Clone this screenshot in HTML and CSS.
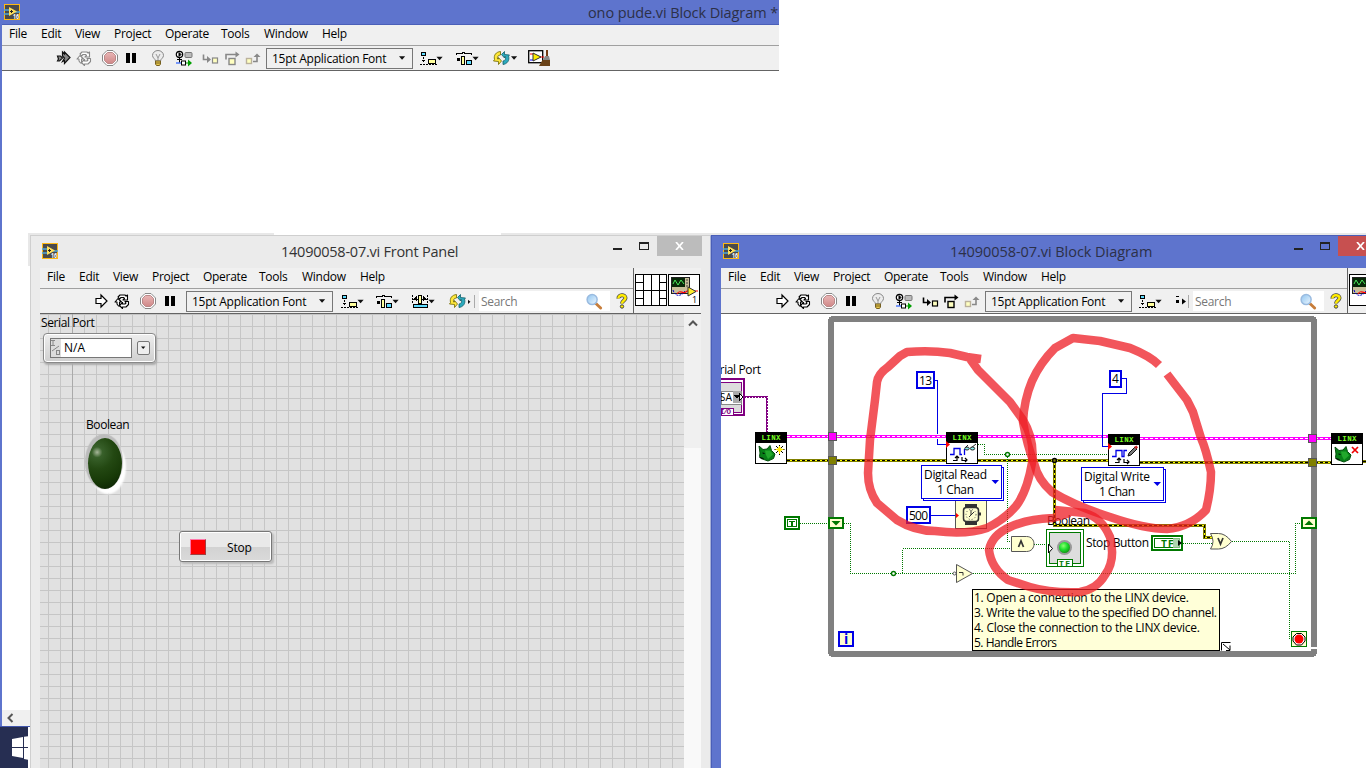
FILE: index.html
```html
<!DOCTYPE html>
<html lang="en">
<head>
<meta charset="utf-8">
<title>14090058-07.vi Block Diagram</title>
<link rel="stylesheet" href="styles.css">
</head>
<body>
<svg class="defs" width="0" height="0">
  <defs>
    <linearGradient id="lens" x1="0" y1="0" x2="1" y2="1"><stop offset="0" stop-color="#8fc4f0"/><stop offset="1" stop-color="#eef8ff"/></linearGradient>
    <linearGradient id="redoct" x1="0" y1="0" x2="0" y2="1"><stop offset="0" stop-color="#e9b5b5"/><stop offset="1" stop-color="#cf8888"/></linearGradient>
    <radialGradient id="greenled" cx=".4" cy=".35" r=".7"><stop offset="0" stop-color="#8cff70"/><stop offset=".5" stop-color="#20e030"/><stop offset="1" stop-color="#109010"/></radialGradient>
  </defs>
  <symbol id="app" viewBox="0 0 16 16"><rect x=".5" y=".5" width="15" height="15" fill="#4a4a4a" stroke="#fdb813"/><path d="M0 6h5M0 10h5M11 8h5" stroke="#4fa6d8" stroke-width="1.5"/><path d="M5 3l8 4.500-8 4.500z" fill="#ffdf5a"/><path d="M6 7.500h3M7.500 6v3" stroke="#222"/><text x="9" y="14.500" font-size="6.500" fill="#fff" font-weight="bold" textLength="6" lengthAdjust="spacingAndGlyphs">16</text></symbol>
  <symbol id="run" viewBox="0 0 16 16"><path d="M1 5.500h5V2l6 6-6 6v-3.500H1z" fill="#fff" stroke="#000" stroke-width="1.200"/></symbol>
  <symbol id="broken" viewBox="0 0 16 16"><path d="M1.500 6h3l2 2-3 3h-2l1-2zM6.500 2l2 2v-2l5.500 5.500L8.500 13.500v-3l-2 1 2-3.500-2-2z" fill="#888" stroke="#111" stroke-width="1.200"/></symbol>
  <symbol id="cont" viewBox="0 0 16 16"><g fill="#fff" stroke="currentColor" stroke-width="1.100" stroke-linejoin="round"><path d="M4 4l2-2h5l1 1 1.500-1v5H9l1.500-1.500L9.500 4.500H7L5.500 6z"/><path d="M1 9l3-3.500L7.500 9h-2v2.500l1 1.500h-2L3 11V9z"/><path d="M14.500 8.500v3L12 14H8.500v1.500l-3-3 3-3V11H11l1-1-1-1.500z"/></g></symbol>
  <symbol id="abort" viewBox="0 0 16 16"><path d="M5 .5h6L15.500 5v6L11 15.500H5L.5 11V5z" fill="#fff" stroke="#888"/><path d="M5.500 2.500h5l3 3v5l-3 3h-5l-3-3v-5z" fill="url(#redoct)" stroke="#b98989"/></symbol>
  <symbol id="pause" viewBox="0 0 12 16"><path d="M1 3h4v10H1zM7 3h4v10H7z" fill="#000"/></symbol>
  <symbol id="bulb" viewBox="0 0 14 16"><path d="M4.500 11C4.500 9 1.500 8 1.500 5.500a5.500 5 0 0 1 11 0c0 2.500-3 3.500-3 5.500z" fill="#ececec" stroke="#888"/><path d="M5 4l2 4 2-4M7 8v3" fill="none" stroke="#999"/><path d="M4.500 11h5v3l-1 1.500h-3l-1-1.500z" fill="#e8c84c" stroke="#776020"/><path d="M4 13h6" stroke="#776020"/></symbol>
  <symbol id="exec" viewBox="0 0 18 16"><circle cx="4.500" cy="4" r="3.200" fill="#fff" stroke="#000" stroke-width="1.200"/><path d="M4 2v4l2-2zM4.500 7v5M2 9h5" stroke="#000"/><rect x="10" y="2" width="7" height="5" rx="1" fill="#bbb" stroke="#777"/><path d="M1 12.500h6" stroke="#0040ff"/><rect x="6.500" y="10.500" width="4" height="4" fill="#fff" stroke="#000"/><path d="M11 12.500h3" stroke="#090"/><path d="M13 9l4 3.500-4 3.500z" fill="#00a000"/></symbol>
  <symbol id="stepin" viewBox="0 0 18 16"><path d="M2.500 4v5H7" fill="none" stroke="currentColor" stroke-width="1.600"/><path d="M6 5.500L10 9l-4 3.500z" fill="currentColor"/><rect x="11.500" y="7.500" width="5" height="5" fill="#ffffc0" stroke="currentColor" stroke-width="1.200"/></symbol>
  <symbol id="stepover" viewBox="0 0 18 16"><path d="M2 9V4h11" fill="none" stroke="currentColor" stroke-width="1.600"/><path d="M11.500 1l4 3-4 3z" fill="currentColor"/><rect x="5" y="8" width="6" height="6" fill="#ffffc0" stroke="currentColor" stroke-width="1.400"/></symbol>
  <symbol id="stepout" viewBox="0 0 18 16"><rect x="2.500" y="8" width="5" height="5" fill="#ffffc0" stroke="#bbb29c" stroke-width="1.400"/><path d="M9 11h4V5" fill="none" stroke="#888" stroke-width="1.600"/><path d="M9.500 6.500L13 3l3.500 3.500z" fill="#888"/></symbol>
  <symbol id="drop" viewBox="0 0 8 5"><path d="M0 0h7L3.500 4z" fill="#111"/></symbol>
  <symbol id="align" viewBox="0 0 24 16"><g shape-rendering="crispEdges"><rect x="1.500" y="1.500" width="4" height="3" fill="#5fdcff" stroke="#000"/><path d="M3.500 6v5M0 13.500h17" stroke="#000" stroke-dasharray="2 1"/><path d="M1 9h5l-2.500 3z"/><rect x="8.500" y="8.500" width="7" height="4" fill="#ffff9c" stroke="#000"/></g><use href="#drop" x="16.500" y="6" width="7" height="5"/></symbol>
  <symbol id="dist" viewBox="0 0 24 16"><g shape-rendering="crispEdges"><path d="M.5 4V2.500h6v-1h2v1h7V4" fill="none" stroke="#000"/><path d="M1 7h3v3H1z"/><rect x="5.500" y="5.500" width="3" height="8" fill="#ffff9c" stroke="#000"/><rect x="10.500" y="9.500" width="5" height="4" fill="#5fdcff" stroke="#000"/></g><use href="#drop" x="16.500" y="6" width="7" height="5"/></symbol>
  <symbol id="resize" viewBox="0 0 24 16"><g shape-rendering="crispEdges"><path d="M.5 1v9M15.500 1v9M1 5.500h5M10 5.500h5" stroke="#000" stroke-dasharray="2 1"/><rect x="6.500" y="1.500" width="3" height="8" fill="#ffff9c" stroke="#000"/><path d="M2 5l3-3v6zM14 5l-3-3v6z"/><rect x="1.500" y="10.500" width="14" height="3" fill="#5fdcff" stroke="#000"/></g><use href="#drop" x="16.500" y="6" width="7" height="5"/></symbol>
  <symbol id="reorder" viewBox="0 0 17 16"><path d="M7.500 1.500C3 2 .5 5 1.500 9.500L.5 11l5 .5v3l3-3.500-3-3.500v1.500H4.500C4 7 5 5 7.500 5z" fill="#ffe83b" stroke="#6d6600" stroke-width=".8"/><path d="M10 14.500c4-.5 7-4 5.500-8.500l1-1-5-.5v-3l-3 3 3 3.500V6.500h1C13 9 12 11 10 11z" fill="#2baabd" stroke="#115e6b" stroke-width=".8"/></symbol>
  <symbol id="clean" viewBox="0 0 24 17"><rect x=".7" y=".7" width="14" height="12" fill="#fff" stroke="#000" stroke-width="1.300"/><path d="M2 4h3M12 7h4" stroke="red"/><path d="M2 10h3" stroke="#00f"/><path d="M5 3l8 4-8 4z" fill="#ffec00" stroke="#333"/><path d="M18 0h2v7h-2z" fill="#743b12"/><path d="M17 6h4l1 4h-7z" fill="#888"/><path d="M14.500 10H22v6H11z" fill="#6a4217"/></symbol>
  <symbol id="glass" viewBox="0 0 18 18"><path d="M11 11l5 5" stroke="#c77d3a" stroke-width="3" stroke-linecap="round"/><circle cx="7" cy="7" r="5.300" fill="url(#lens)" stroke="#9abbe0" stroke-width="1.600"/></symbol>
  <symbol id="help" viewBox="0 0 12 16"><path d="M2.500 5.500C2 1.500 9.500 1 9.500 5c0 2.500-3.500 2.500-3.500 5.500" fill="none" stroke="#444" stroke-width="4"/><path d="M2.500 5.500C2 1.500 9.500 1 9.500 5c0 2.500-3.500 2.500-3.500 5.500" fill="none" stroke="#ffec00" stroke-width="2.500"/><circle cx="6" cy="13.500" r="1.700" fill="#ffec00" stroke="#444"/></symbol>
  <symbol id="pane" viewBox="0 0 32 32"><path d="M.5.5h31v31H.5zM8.500 0v32M16.500 0v32M24.500 0v32M8 16.500h16M0 8.500h8M0 16.500h8M0 24.500h8M24 8.500h8M24 16.500h8M24 24.500h8" fill="#fff" stroke="#000" shape-rendering="crispEdges"/></symbol>
  <symbol id="viicon" viewBox="0 0 32 32"><rect x=".5" y=".5" width="31" height="31" fill="#fff" stroke="#000"/><rect x="3.500" y="3.500" width="18" height="16" fill="#c8c09a" stroke="#222"/><rect x="4" y="4" width="13" height="9" fill="#082808"/><path d="M5 10l2-4 3 5 3-5 3 4" fill="none" stroke="#4be85a"/><path d="M18 6h2M18 9h2M18 12h2" stroke="#444"/><path d="M5 16c2 7 8 7 12 1" fill="none" stroke="#00c" stroke-dasharray="2 1"/><path d="M9 20c3-6 6 2 10-3h11" fill="none" stroke="red" stroke-width="1.200"/><path d="M20 13l8 4.500-8 4.500z" fill="#ffec2b" stroke="#333"/><text x="24" y="29" font-size="9">1</text></symbol>
  <symbol id="linx" viewBox="0 0 32 32"><rect x=".5" y=".5" width="31" height="31" fill="#fff" stroke="#000"/><path d="M0 0h32v11H0z"/><text class="pix" x="6.500" y="8" fill="#7f2" font-size="7.500" textLength="19">LINX</text></symbol>
  <symbol id="dog" viewBox="0 0 18 17"><path d="M1 1l4 3.500 4-.5L12 .5l1.500 5L17 9l-1.500 4.500L10 16l-7-2.500-1.500-2L2 8z" fill="#087f18" stroke="#034d0b"/><path d="M7 5.500h5l3 4-5 4.500-2-4z" fill="#22a82c"/><path d="M4.500 8l2 .5M1.500 12.500l4 1" stroke="#000"/></symbol>
</svg>

<main class="desktop">
  <section class="window back">
    <header class="titlebar"><svg class="appicon"><use href="#app"/></svg><h1>ono pude.vi Block Diagram *</h1></header>
    <div class="chrome">
      <nav class="menu"><span>File</span><span>Edit</span><span>View</span><span>Project</span><span>Operate</span><span>Tools</span><span>Window</span><span>Help</span></nav>
      <div class="toolbar tools-back">
        <svg class="i16"><use href="#broken"/></svg><svg class="i16 dim"><use href="#cont"/></svg><svg class="i16"><use href="#abort"/></svg><svg class="i12"><use href="#pause"/></svg><svg class="i14"><use href="#bulb"/></svg><svg class="i18"><use href="#exec"/></svg><svg class="i18 dim"><use href="#stepin"/></svg><svg class="i18 dim"><use href="#stepover"/></svg><svg class="i18"><use href="#stepout"/></svg>
        <div class="combo"><span>15pt Application Font</span><svg class="caret"><use href="#drop"/></svg></div>
        <svg class="i24"><use href="#align"/></svg><svg class="i24"><use href="#dist"/></svg><span class="pair"><svg class="i17"><use href="#reorder"/></svg><svg class="caret"><use href="#drop"/></svg></span><svg class="i24"><use href="#clean"/></svg>
      </div>
    </div>
    <div class="backbody"></div>
    <div class="hscroll"><svg width="8" height="10" viewBox="0 0 8 10"><path d="M6.500 1l-4 4 4 4" fill="none" stroke="#555" stroke-width="2"/></svg></div>
  </section>
  <div class="taskbar"><svg width="18" height="24" viewBox="0 0 18 24"><path d="M0 3l11-2v10H0zM12 .8L18 0v11h-6zM0 12h11v10L0 20zM12 12h6v12l-6-1z" fill="#fff"/></svg></div>
  <div class="ghost ghost-left"></div>
  <div class="ghost ghost-right"></div>

  <section class="window front">
    <header class="titlebar"><svg class="appicon"><use href="#app"/></svg><h1>14090058-07.vi Front Panel</h1>
      <div class="caption"><i class="min"></i><i class="max"></i><b class="close"><svg width="9" height="8" viewBox="0 0 9 8"><path d="M1 0l7 8M8 0L1 8" stroke="#fff" stroke-width="1.700"/></svg></b></div></header>
    <div class="content">
      <div class="head">
        <div class="chrome">
          <nav class="menu"><span>File</span><span>Edit</span><span>View</span><span>Project</span><span>Operate</span><span>Tools</span><span>Window</span><span>Help</span></nav>
          <div class="toolbar tools-front">
            <svg class="i16"><use href="#run"/></svg><svg class="i16"><use href="#cont"/></svg><svg class="i16"><use href="#abort"/></svg><svg class="i12"><use href="#pause"/></svg>
            <div class="combo"><span>15pt Application Font</span><svg class="caret"><use href="#drop"/></svg></div>
            <svg class="i24"><use href="#align"/></svg><svg class="i24"><use href="#dist"/></svg><svg class="i24"><use href="#resize"/></svg><span class="pair"><svg class="i17"><use href="#reorder"/></svg><svg class="caret side"><use href="#drop"/></svg></span><i class="sep"></i>
            <div class="search"><span>Search</span><svg class="i18"><use href="#glass"/></svg></div><svg class="i12"><use href="#help"/></svg>
          </div>
        </div>
        <div class="vipane"><svg class="i32"><use href="#pane"/></svg><svg class="i32"><use href="#viicon"/></svg></div>
      </div>
      <div class="panelrow">
        <div class="panel">
          <i class="origin"></i>
          <span class="label serial">Serial Port</span>
          <div class="visa"><span class="io"><svg width="10" height="18" viewBox="0 0 10 18"><path d="M0 1.500h4M2 1v6M0 6.500h4M1 12l7-5" fill="none" stroke="#888"/><rect x="5.500" y="11.500" width="3" height="4" fill="none" stroke="#888"/></svg></span><span class="value">N/A</span><span class="pick"><svg class="caret"><use href="#drop"/></svg></span></div>
          <span class="label bool">Boolean</span>
          <div class="led"></div>
          <div class="stop"><i></i><span>Stop</span></div>
        </div>
        <div class="vscroll"><svg width="10" height="8" viewBox="0 0 10 8"><path d="M1 6.500l4-4 4 4" fill="none" stroke="#555" stroke-width="2"/></svg></div>
      </div>
    </div>
  </section>

  <section class="window block">
    <header class="titlebar"><svg class="appicon"><use href="#app"/></svg><h1>14090058-07.vi Block Diagram</h1>
      <div class="caption"><i class="min"></i><i class="max"></i><b class="close"><svg width="9" height="8" viewBox="0 0 9 8"><path d="M1 0l7 8M8 0L1 8" stroke="#fff" stroke-width="1.700"/></svg></b></div></header>
    <div class="content">
      <div class="head">
        <div class="chrome">
          <nav class="menu"><span>File</span><span>Edit</span><span>View</span><span>Project</span><span>Operate</span><span>Tools</span><span>Window</span><span>Help</span></nav>
          <div class="toolbar tools-block">
            <svg class="i16"><use href="#run"/></svg><svg class="i16"><use href="#cont"/></svg><svg class="i16"><use href="#abort"/></svg><svg class="i12"><use href="#pause"/></svg><svg class="i14"><use href="#bulb"/></svg><svg class="i18"><use href="#exec"/></svg><svg class="i18"><use href="#stepin"/></svg><svg class="i18"><use href="#stepover"/></svg><svg class="i18"><use href="#stepout"/></svg>
            <div class="combo"><span>15pt Application Font</span><svg class="caret"><use href="#drop"/></svg></div>
            <svg class="i24"><use href="#align"/></svg><svg width="13" height="16" viewBox="0 0 13 16"><path d="M1 3h3v1H1zM1 7h3v3H1z"/><path d="M7 5.500l4 3-4 3z"/></svg><i class="sep"></i>
            <div class="search"><span>Search</span><svg class="i18"><use href="#glass"/></svg></div><svg class="i12"><use href="#help"/></svg>
          </div>
        </div>
        <div class="vipane"><svg class="i32"><use href="#viicon"/></svg></div>
      </div>
      <svg class="diagram" width="645" height="454" viewBox="721 314 645 454">
        <g shape-rendering="crispEdges">
          <rect x="831" y="319" width="483" height="335" rx="2" fill="none" stroke="#808080" stroke-width="6"/>
          <path d="M1310 647h7v2h-7z" fill="#fff"/>
          <path d="M787 436.500H946M978 436.500h130M1140 438.500h191" stroke="#f0f" stroke-width="3"/>
          <path d="M787 436.500H946M978 436.500h130M1140 438.500h191" stroke="#fff" stroke-dasharray="3 2"/>
          <g fill="none"><path d="M787 460.500H946M978 460.500h130M1140 462.500h191M1363 461.500h3M1054.500 460v65.500h150V537.500h10" stroke="#808000" stroke-width="3"/>
          <path d="M787 460.500H946M978 460.500h130M1140 462.500h191M1363 461.500h3M1054.500 460v65.500h150V537.500h10" stroke="#ff0"/>
          <path d="M787 460.500H946M978 460.500h130M1140 462.500h191M1363 461.500h3M1054.500 460v65.500h150V537.500h10" stroke="#000" stroke-dasharray="3 2"/></g>
          <path d="M745 397h22V432" fill="none" stroke="#800080" stroke-width="2"/><path d="M746 397.500h21.500V432" fill="none" stroke="#fff" stroke-dasharray="1 2"/>
          <g fill="none" stroke="#007800" stroke-dasharray="1 1"><path d="M800 523.500h29M844 523.500h6.500v50H954M893.500 573.500h9v-25H1011M978 444.500h6.500v10H1108M1007.500 454.500v87h5M1034 544.500h12v3M1183 543.500h30M1232 541.500h57.500V639M973 573.500h322.500v-50h6"/></g>
          <g fill="none" stroke="#0000e6"><path d="M934 380.500h3.500v53M937.500 439v5.500h9M931 515.500h25M1121 378.500h5.500v15h-24v53h6"/></g>
          <g stroke="#555"><path d="M828.500 432.500h8v8h-8zM1308.500 434.500h8v8h-8z" fill="#f0f"/><path d="M828.500 456.500h8v8h-8zM1308.500 458.500h8v8h-8z" fill="#808000"/></g>
        </g>
        <g fill="#fff" stroke="#007800" stroke-width="1.400"><circle cx="893.500" cy="573.500" r="2"/><circle cx="1007.500" cy="454.500" r="2"/></g>
        <circle cx="1054.500" cy="460.500" r="2" fill="#808000" stroke="#000" stroke-width="1.500"/>

        <text x="707" y="374" textLength="54">Serial Port</text>
        <g shape-rendering="crispEdges"><rect x="700" y="379" width="44" height="36" fill="#fff" stroke="#800080" stroke-width="2"/><rect x="700.500" y="382.500" width="41" height="30" fill="#ddd" stroke="#800080"/><path d="M721 391h20v13h-20z" fill="#fff" stroke="#888"/><path d="M733 391h8v12h-8z" fill="#aaa"/><path d="M734 395h6l-3 4z"/><path d="M739 393l4 4-4 4z" fill="#fff" stroke="#000"/><path d="M721 408h12v7h-12z" fill="#fff" stroke="#800080"/></g>
        <text x="717" y="401" font-size="10" textLength="15" lengthAdjust="spacingAndGlyphs">ISA</text><text class="pix" x="720" y="414" font-size="7.500" fill="#800080" textLength="11">I/O</text>

        <use href="#linx" x="755" y="432" width="32" height="32"/><use href="#dog" x="758" y="445" width="18" height="17"/>
        <path d="M779.500 445v10M774.500 449.500h10M776 446l7 7M783 446l-7 7" stroke="#000" stroke-width="1"/><path d="M779.500 446v8M775.500 449.500h8" stroke="#ffe800"/><circle cx="779.500" cy="449.500" r="2.300" fill="#ffe800"/>
        <use href="#linx" x="1331" y="433" width="32" height="32"/><use href="#dog" x="1334" y="446" width="18" height="17"/><path d="M1352 447l6 6M1358 447l-6 6" stroke="#e00" stroke-width="1.700"/>

        <g><rect x="955.500" y="498.500" width="31" height="30" fill="#ffffd0" stroke="#555"/><path d="M965 504h12v5h-12zM965 520h12v5h-12z" fill="#333"/><rect x="963.500" y="507.500" width="15" height="14" rx="3" fill="#ffffd0" stroke="#333" stroke-width="1.500"/><circle cx="971" cy="514.500" r="5" fill="none" stroke="#555" stroke-dasharray="1 2"/><path d="M971 510v5l3-3M971 515l-2 2" fill="none" stroke="#333"/><path d="M979 514h2" stroke="#333" stroke-width="3"/></g>
        <path d="M956 513l3 2.500-3 2.500z" fill="red"/>

        <use href="#linx" x="946" y="432" width="32" height="32"/><g fill="none"><path d="M950 454.500h4v-6h6v6h2M964.500 455v-6" stroke="#0000e6" stroke-width="1.300"/><path d="M953 460.500h4v-4M955 458l2-2 2 2M962 457v3.500h5M965 458l2 2-2 2" stroke="#000" stroke-width="1.200"/></g><path d="M946 441l4 3.500-4 3.500z" fill="red"/>
        <path d="M965 448l3-3M971 448l5-4" fill="none" stroke="#222"/><g fill="#8ee" stroke="#222"><ellipse cx="967" cy="448.500" rx="2.200" ry="1.500"/><ellipse cx="972.500" cy="448.500" rx="2.200" ry="1.500"/></g>
        <use href="#linx" x="1108" y="434" width="32" height="32"/><g fill="none"><path d="M1112 456.500h4v-6h6v6h2v-6h3" stroke="#0000e6" stroke-width="1.300"/><path d="M1115 462.500h4v-4M1117 460l2-2 2 2M1124 459v3.500h5M1127 460l2 2-2 2" stroke="#000" stroke-width="1.200"/></g><path d="M1108 443l4 3.500-4 3.500z" fill="red"/><path d="M1128 456l1-3 6-6 2 2-6 6z" fill="#777" stroke="#111"/><path d="M1134 447l2.500-1.500 1.500 2-2 1.500z" fill="#c22"/>

        <g fill="#fff" stroke="#0000e6" shape-rendering="crispEdges"><rect x="923.500" y="467.500" width="80" height="33"/><rect x="921.500" y="465.500" width="80" height="33"/><rect x="1083.500" y="469.500" width="82" height="33"/><rect x="1081.500" y="467.500" width="82" height="33"/></g>
        <path d="M991.500 480h7.500l-3.700 4zM1153.500 482h7.500l-3.700 4z" fill="#0000e6"/>
        <text x="924" y="479" textLength="63">Digital Read</text><text x="937" y="494" textLength="37">1 Chan</text>
        <text x="1084" y="481" textLength="66">Digital Write</text><text x="1099" y="496" textLength="36">1 Chan</text>

        <g fill="#fff" stroke="#0000e6" stroke-width="2" shape-rendering="crispEdges"><rect x="917" y="372" width="17" height="16"/><rect x="1110" y="371" width="11" height="16"/><rect x="907" y="507" width="23" height="16"/><rect x="839" y="632" width="14" height="14" fill="#ffffd0"/></g>
        <text x="919" y="385" textLength="13">13</text><text x="1112" y="383">4</text><text x="909" y="520" textLength="19">500</text><text x="844" y="644" font-size="14" font-weight="bold" fill="#0000e6">i</text>

        <g shape-rendering="crispEdges" stroke="#007800"><rect x="785" y="517" width="14" height="12" fill="#fff" stroke-width="2"/><rect x="787.500" y="519.500" width="9" height="7" fill="#fff"/><path d="M789 521.500h6"/><path d="M792 521v5" stroke-width="2"/><rect x="829" y="518" width="14" height="10" fill="#ffffd0" stroke-width="2"/><rect x="1302" y="518" width="14" height="10" fill="#ffffd0" stroke-width="2"/></g>
        <path d="M831.500 521h9l-4.500 4.500zM1304.500 525h9l-4.500-4.500z" fill="#007800"/>

        <path d="M1011.500 536.500h15c10 0 10 15 0 15h-15z" fill="#ffffd0" stroke="#555"/><path d="M1018.500 547l2.500-6 2.500 6" fill="none" stroke="#333" stroke-width="1.700"/>
        <path d="M1210.500 533.500h8q7 0 13 8-6 7.500-13 7.500h-8q5-7.500 0-15.500z" fill="#ffffd0" stroke="#555"/><path d="M1218 538l2.500 6 2.500-6" fill="none" stroke="#333" stroke-width="1.700"/>
        <path d="M956.500 564.500l16 9-16 9z" fill="#ffffd0" stroke="#555"/><path d="M959 572.500h4v3" fill="none" stroke="#333"/><circle cx="954.500" cy="573.500" r="1.500" fill="#fff" stroke="#555"/>

        <text x="1047" y="525" textLength="43">Boolean</text>
        <g shape-rendering="crispEdges" stroke="#007800"><rect x="1046.500" y="529.500" width="37" height="37" fill="#fff"/><rect x="1049.500" y="532.500" width="31" height="31" fill="#ddd" stroke-width="1.500"/><path d="M1057 559h15v7h-15z" fill="#fff"/><rect x="1152" y="536" width="30" height="14" fill="#fff" stroke-width="2"/><rect x="1154.500" y="538.500" width="25" height="9" fill="#fff"/></g>
        <circle cx="1064.500" cy="547.500" r="7.500" fill="#999"/><circle cx="1064.500" cy="547.500" r="5.500" fill="url(#greenled)"/><path d="M1048.500 544l4 4.500-4 4.500z" fill="#fff" stroke="#000"/>
        <text class="pix" x="1059" y="565.500" font-size="8" fill="#007800" textLength="11">TF</text><text class="pix" x="1161" y="547" font-size="10" fill="#007800" textLength="13">TF</text><path d="M1173 538h7v10h-7z" fill="#9c9" opacity=".8"/><path d="M1178 540l4 3-4 3z"/>
        <text x="1086" y="547" textLength="63">Stop Button</text>

        <rect x="1291.500" y="631.500" width="15" height="15" fill="#ffffd0" stroke="#007800"/><path d="M1296.500 633.500h5l3.500 3.500v4l-3.500 4h-5l-3.500-4v-4z" fill="#fff" stroke="#000"/><circle cx="1299" cy="639" r="4.500" fill="red"/>
        <rect x="972.500" y="589.500" width="247" height="61" fill="#ffffd8" stroke="#000" shape-rendering="crispEdges"/>
        <text x="974" y="602" textLength="215">1. Open a connection to the LINX device.</text><text x="974" y="617" textLength="243">3. Write the value to the specified DO channel.</text><text x="974" y="632" textLength="226">4. Close the connection to the LINX device.</text><text x="974" y="647" textLength="83">5. Handle Errors</text>
        <path d="M1230.500 642.500h-9v8M1223 644l7 6M1226 650.500h4v-5" fill="none" stroke="#000"/>

        <g class="marker">
          <path d="M981 359L967 357 950 353Q930 350 907 352L900 356 888 367Q878 374 877 382L875 400 870 440 868 473Q868 490 877 503L897 520Q915 531 935 531 967 535 987 528 1005 519 1016 506 1027 492 1032 463 1035 440 1023 420L1010 402 978 370 968 356"/>
          <path d="M1159 365Q1150 356 1130 348L1100 341 1073 338 1055 348Q1040 363 1032 381 1024 400 1023 422 1027 445 1034 463 1038 480 1052 492 1075 506 1110 517 1145 529 1167 529 1190 527 1206 510 1211 490 1211 472 1206 449 1201 438L1193 412 1187 400 1167 374"/>
          <path d="M1055 510L1085 513Q1102 518 1110 537 1116 560 1105 575 1097 589 1080 592 1050 593 1030 587L1008 580Q991 568 989 550 992 535 1010 527 1027 519 1053 518L1070 513"/>
        </g>
      </svg>
    </div>
  </section>
</main>
</body>
</html>
```
FILE: styles.css
```css
* { box-sizing: border-box; }
body { margin: 0; background: #fff; font: 12px "Open Sans", "Noto Sans", sans-serif; color: #000; overflow: hidden; }
svg { display: block; flex: none; }
symbol { overflow: visible; }
.defs { position: absolute; }
text { font-family: "Open Sans", "Noto Sans", sans-serif; }
.desktop { position: relative; width: 1366px; height: 768px; overflow: hidden; background: #fff; }
.window { position: absolute; display: flex; flex-direction: column; }
.back { left: 0; top: 0; width: 779px; height: 727px; padding-left: 2px; background: #5e74cd; border-bottom: 1px solid #4156ad; }
.front { left: 30px; top: 235px; width: 681px; height: 533px; padding: 0 9px; background: #ebebeb; border: 1px solid #cfcfcf; border-bottom: 0; border-right-color: #a8b1d6; }
.block { left: 711px; top: 235px; width: 655px; height: 533px; padding-left: 9px; background: #5e74cd; border-left: 1px solid #4a5fb8; border-top: 1px solid #4a5fb8; overflow: hidden; }

.titlebar { display: flex; align-items: flex-start; height: 32px; flex: none; }
.back .titlebar { height: 25px; border-bottom: 1px solid #4a5fb8; }
.titlebar h1 { margin: 0; font-size: 14.500px; line-height: 20px; font-weight: 400; color: #2c3048; white-space: nowrap; }
.back h1 { margin: 3px 0 0 568px; letter-spacing: -.1px; }
.front h1 { margin: 6px 0 0 223px; color: #333; letter-spacing: -.24px; }
.block h1 { margin: 6px 0 0 211px; letter-spacing: -.05px; }
.appicon { width: 16px; height: 16px; margin: 7px 0 0 2px; }
.back .appicon { margin-top: 4px; }
.caption { display: flex; margin-left: auto; }
.front .caption { margin-right: -1px; }
.min { width: 9px; height: 2px; background: #222; margin: 12px 17px 0 0; }
.max { width: 10px; height: 8px; border: 1px solid #222; border-top-width: 2px; margin: 6px 8px 0 0; }
.close { width: 45px; height: 20px; background: #bcbcbc; display: flex; align-items: center; justify-content: center; }
.block .close { width: 28px; background: #c75050; padding-left: 17px; }

.content { display: flex; flex-direction: column; flex: 1; min-height: 0; }
.head { display: flex; height: 46px; flex: none; background: #f0f0f0; border-bottom: 1px solid #646464; }
.front .content { width: 661px; }
.chrome { flex: 1; min-width: 0; background: #f0f0f0; }
.back .chrome { flex: none; height: 46px; border-bottom: 1px solid #646464; }
.menu { display: grid; grid-template-columns: 32px 34px 39px 51px 56px 43px 58px 40px; height: 21px; padding-left: 7px; border-bottom: 1px solid #a0a0a0; line-height: 18px; letter-spacing: -.28px; }
.toolbar { display: grid; align-items: center; height: 24px; }
.tools-back { grid-template-columns: 20px 26px 23px 26px 24px 26px 23px 20px 22px 154px 36px 37px 35px 24px; padding-left: 54px; }
.tools-front { grid-template-columns: 19px 26px 24px 22px 155px 35px 36px 37px 25px 5px 137px 12px; padding-left: 55px; }
.tools-block { grid-template-columns: 19px 26px 24px 26px 24px 26px 22px 20px 22px 154px 36px 13px 5px 137px 12px; padding-left: 55px; }
.i12 { width: 12px; height: 16px; }
.i14 { width: 14px; height: 16px; }
.i16 { width: 16px; height: 16px; }
.i17 { width: 17px; height: 16px; }
.i18 { width: 18px; height: 17px; }
.i24 { width: 24px; height: 17px; }
.i32 { width: 32px; height: 32px; }
.dim { color: #888; }
.combo { width: 147px; height: 21px; border: 1px solid #777; background: #f0f0f0; display: flex; align-items: center; padding: 0 6px 0 5px; justify-content: space-between; white-space: nowrap; letter-spacing: -.24px; }
.caret { width: 7px; height: 5px; }
.pair { display: flex; align-items: center; gap: 1px; }
.side { transform: rotate(-90deg) scale(.7); margin-left: -1px; }
.sep { width: 1px; height: 13px; background: #aaa; }
.search { width: 131px; height: 20px; background: #fff; display: flex; align-items: center; justify-content: space-between; padding: 0 7px 0 2px; color: #777; letter-spacing: -.3px; }
.vipane { flex: none; width: 68px; border-left: 1px solid #646464; display: flex; gap: 1px; padding: 6px 0 0 1px; }
.block .vipane { width: 19px; overflow: hidden; }

.backbody { flex: 1; background: #fff; }
.hscroll { height: 16px; background: #f0f0f0; padding: 3px 0 0 4px; }
.taskbar { position: absolute; left: 0; top: 727px; width: 28px; height: 41px; background: #262e52; padding: 9px 0 0 12px; overflow: hidden; }
.ghost { position: absolute; top: 233px; background: #e8e8e8; }
.ghost-left { left: 28px; width: 246px; height: 33px; }
.ghost-right { left: 501px; width: 865px; height: 3px; }

.panelrow { display: flex; flex: 1; }
.panel { position: relative; width: 644px; background-color: #e1e1e1; background-image: linear-gradient(#c6c6c6 1px, transparent 1px), linear-gradient(90deg, #c6c6c6 1px, transparent 1px); background-size: 12px 12px; background-position: 8px 0; }
.origin { position: absolute; left: 32px; top: 0; width: 1px; height: 100%; background: #aaa; }
.vscroll { width: 17px; background: linear-gradient(#f0f0f0 0 134px, #f9f9f9 134px); display: flex; flex-direction: column; align-items: center; padding-top: 5px; }
.label { position: absolute; letter-spacing: -.4px; line-height: 16px; white-space: nowrap; }
.serial { left: 1px; top: 1px; }
.bool { left: 46px; top: 103px; }
.visa { position: absolute; left: 3px; top: 19px; width: 113px; height: 30px; border: 1px solid #888; border-radius: 4px; background: linear-gradient(#eee, #cfcfcf); box-shadow: inset 0 0 0 1px #fff, 1px 2px 2px #aaa; display: flex; align-items: center; padding: 0 4px 0 6px; }
.io { width: 11px; height: 20px; background: #ddd; border: 1px solid #777; border-right: 0; }
.value { width: 71px; height: 20px; background: #fff; border: 1px solid #777; border-left: 0; padding-left: 3px; line-height: 18px; }
.pick { width: 13px; height: 14px; margin-left: 5px; border: 1px solid #777; border-radius: 2px; background: #eee; display: flex; align-items: center; justify-content: center; }
.pick .caret { width: 5px; height: 4px; }
.led { position: absolute; left: 48px; top: 124px; width: 34px; height: 51px; border-radius: 50%; background: radial-gradient(circle at 27% 28%, #a7b79a 0, #38602a 12%, #234812 38%, #183a08 65%, #081c02 100%); box-shadow: -1px -2px 1px 2px #bcbcbc, 3px 4px 2px 1px #fff; }
.stop { position: absolute; left: 139px; top: 217px; width: 93px; height: 31px; border: 1px solid #777; border-radius: 3px; background: linear-gradient(#e9e9e9 0 50%, #d2d2d2 51%, #dadada); box-shadow: inset 0 0 0 1px #fff, 2px 2px 2px #bbb; display: flex; align-items: center; padding-left: 10px; }
.stop i { width: 16px; height: 16px; background: red; border: 1px solid #a04040; border-left-color: #f7a; border-top-color: #f7a; margin-right: 21px; }
.stop span { letter-spacing: -.2px; padding-top: 1px; }
.diagram { background: #fff; font-size: 12px; }
.pix { font-family: "Liberation Mono", monospace; font-weight: bold; }
.marker { fill: none; stroke: #ed1c24; stroke-opacity: .75; stroke-width: 8.500; stroke-linejoin: round; }
```
